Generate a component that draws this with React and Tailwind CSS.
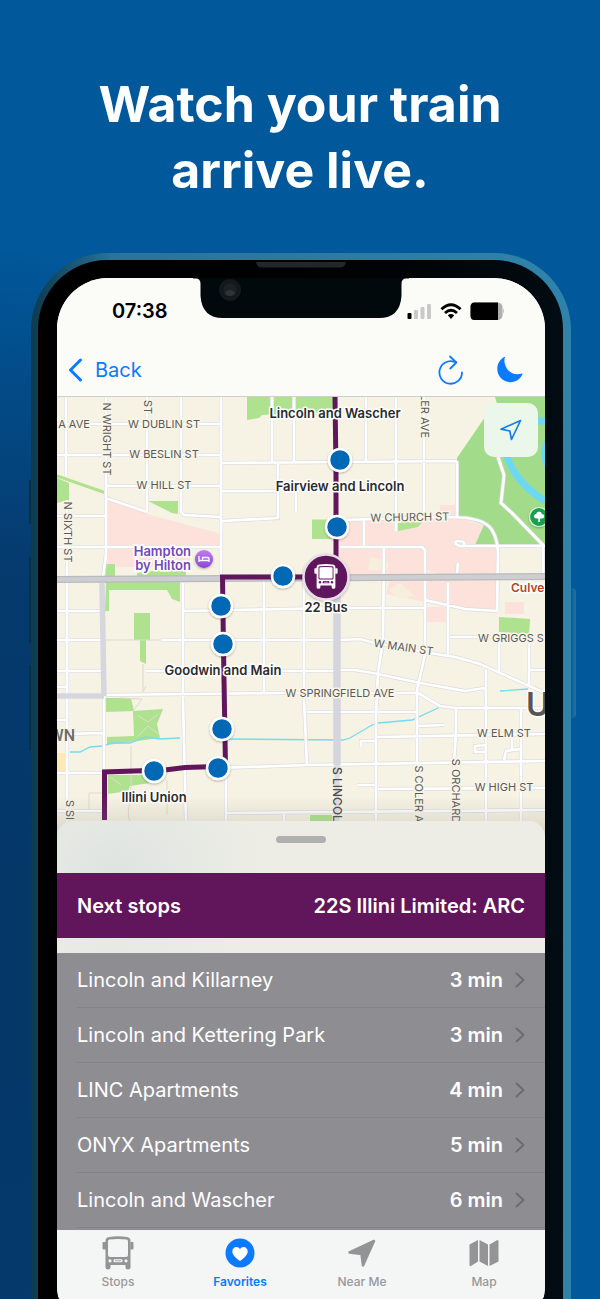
import React from "react";

const PURPLE = "#61165c";

const nextStops = [
  { name: "Lincoln and Killarney", eta: "3 min" },
  { name: "Lincoln and Kettering Park", eta: "3 min" },
  { name: "LINC Apartments", eta: "4 min" },
  { name: "ONYX Apartments", eta: "5 min" },
  { name: "Lincoln and Wascher", eta: "6 min" },
];

const parks = [
  "M247 397H336V412L280 414L262 415L259 418L247 420Z",
  "M57 478L69 483V500L57 503Z",
  "M148 501H178V514L172 513Z",
  "M106 564H115V577H105Z",
  "M137 573L186 567V577H137Z",
  "M106 582H180V602L172 599L167 590H109V611H105Z",
  "M134 613H150V640H146V664L140 661V640H134Z",
  "M105 698H131L134 711L106 712Z",
  "M133 711L163 709L157 724L160 738L107 745V737L134 736Z",
  "M108 775H150V783L130 786L128 791L108 794Z",
  "M312 519.500H335V539H312Z",
  "M397 523L424 520L418 527L398 531Z",
  "M495 397H545V545H475L484 525L457 515V458L483 420L497 404Z",
  "M499 617L530 619L529 635L499 632Z",
  "M310 815H332V822H310Z",
];

const pinks = [
  "M108 501L147 514L221 534V547H190V567H108Z",
  "M338 522L457 517L484 526L475 547H497V611L425 602L386 594L390 580H348L338 560Z",
  "M440 505H457V516H440Z",
  "M426 607H447V622H426Z",
  "M505 602H524V614H505Z",
];

const roads = [
  "M66 397V475", "M67 500V822", "M106 397V555L103 577", "M147 397V512", "M181 397V512L184 515L221 517",
  "M221 397V577", "M272 397V463", "M294 397V463", "M57 424H221", "M57 455H221", "M106 486H221",
  "M222 463L457 461", "M222 491H278", "M278 463V518L222 521", "M296 491V512", "M57 516H106",
  "M57 547H222", "M106 498L147 512", "M366 397V461", "M396 397V531", "M424 397V522", "M457 461V517",
  "M340 520L450 517Q484 517 492 530Q498 540 498 555L497 611", "M340 547H422L425 550V655L417 690V822",
  "M364 520V547", "M384 547L383 640L378 673L376 715V822", "M350 608H425", "M425 600L465 609L497 611",
  "M459 546H545M459 546Q452 542 458 541Q466 541 464 546", "M458 563L457 573", "M498 457L504 475L501 503L512 513L543 545V577",
  "M57 611H102", "M57 640H102", "M161 640H337", "M57 671H101", "M146 671H337", "M183 611L337 608",
  "M183 583V700L186 822", "M264 580V692", "M104 695L280 693H418L440 706L456 708L545 708", "M57 687H66",
  "M57 720H66", "M65 734L103 733", "M104 696V772", "M57 773H104", "M57 811H104", "M218 768L307 765L545 761",
  "M226 770V822", "M226 813L545 810", "M284 813V822", "M304 583V700L307 765", "M340 640L360 639L375 643L430 653L455 657L480 664L545 693",
  "M340 670H355L378 674L420 683L465 691L485 688", "M448 583V655", "M499 636V672", "M529 635V685", "M486 670V822",
  "M450 637H545", "M530 670H545", "M307 712H416", "M376 737L545 734", "M418 726L444 725", "M456 708V735L454 760L456 822",
  "M521 708V822", "M361 747V741H376", "M486 745L475 746V752L486 752", "M504 760L506 751L520 749", "M512 734V749",
  "M357 785H376", "M378 789L545 788",
];

const trails =
  "M104 640H161M143 664V692L146 686M89 812V793H104M131 746V800Q126 812 130 822M167 815V780M120 698L142 699L133 711M137 715L148 722L158 714M137 737L148 726L160 735M110 777L121 785";

const streams =
  "M70 752H80L90 747L103 746L112 743H130L146 737L160 739L180 738M228 739L343 740L350 738L372 725L378 723L412 720L440 707M500 691L528 689";

const streetLabels = [
  { t: "A AVE", x: 74, y: 428 },
  { t: "W DUBLIN ST", x: 164, y: 428 },
  { t: "W BESLIN ST", x: 164, y: 458 },
  { t: "W HILL ST", x: 164, y: 489 },
  { t: "N WRIGHT ST", x: 103, y: 439, r: 90 },
  { t: "N SIXTH ST", x: 64, y: 532, r: 90 },
  { t: "ST", x: 144, y: 407, r: 90 },
  { t: "LER AVE", x: 421, y: 416, r: 90 },
  { t: "W CHURCH ST", x: 410, y: 521, r: -1 },
  { t: "W MAIN ST", x: 403, y: 651, r: 8 },
  { t: "W GRIGGS S", x: 511, y: 642 },
  { t: "W SPRINGFIELD AVE", x: 340, y: 697 },
  { t: "W ELM ST", x: 504, y: 737 },
  { t: "W HIGH ST", x: 504, y: 791 },
  { t: "S COLER A", x: 415, y: 794, r: 90 },
  { t: "S ORCHARD", x: 452, y: 791, r: 90 },
  { t: "S SI", x: 66, y: 810, r: 90 },
];

const stopLabels = [
  { t: "Lincoln and Wascher", x: 335, y: 418 },
  { t: "Fairview and Lincoln", x: 340, y: 491 },
  { t: "22 Bus", x: 326, y: 612 },
  { t: "Goodwin and Main", x: 223, y: 675 },
  { t: "Illini Union", x: 154, y: 802 },
];

const stopDots = [
  [340, 460], [337, 527], [283, 576], [221, 606], [223, 644], [222, 729], [218, 768], [154, 771],
];

const BUS_BODY =
  "M7 0.500Q16-0.800 25 0.500Q28.500 1 28.500 4.500V31Q28.500 33 26 33Q23.500 33 23.500 31V28.500H8.500V31Q8.500 33 6 33Q3.500 33 3.500 31V4.500Q3.500 1 7 0.500ZM1.500 5.500H3.700V13H1.500Q0.500 13 0.500 12V6.500Q0.500 5.500 1.500 5.500ZM30.500 5.500H28.300V13H30.500Q31.500 13 31.500 12V6.500Q31.500 5.500 30.500 5.500Z";

function BusGlyph({ body, cut, pane }) {
  return (
    <>
      <path d={BUS_BODY} fill={body} />
      <path d="M7.500 3Q16 2 24.500 3Q26 3.200 26 5V18.500Q26 20.500 24 20.500H8Q6 20.500 6 18.500V5Q6 3.200 7.500 3Z" fill={cut} />
      {pane && <path d="M8.500 4.200Q16 3.600 23.500 4.200Q24.800 4.300 24.800 5.500V18Q24.800 19.200 23.500 19.200H8.500Q7.200 19.200 7.200 18V5.500Q7.200 4.300 8.500 4.200Z" fill={pane} />}
      <circle cx="8" cy="24.300" r="1.600" fill={cut} />
      <circle cx="24" cy="24.300" r="1.600" fill={cut} />
      <rect x="11.500" y="22.800" width="9" height="3" rx="1.200" fill={cut} />
      <path d="M13 24.300H19" stroke={body} strokeWidth="0.800" />
    </>
  );
}

function RouteMap() {
  const d = roads.join("");
  return (
    <svg viewBox="57 397 488 440" className="block w-full bg-[#f6f2e4]" role="img" aria-label="Live route map">
      <defs>
        <linearGradient id="hotel" x1="0" y1="0" x2="0" y2="1">
          <stop offset="0" stopColor="#c07cf0" />
          <stop offset="1" stopColor="#8b47d6" />
        </linearGradient>
        <linearGradient id="fade" x1="0" y1="0" x2="0" y2="1">
          <stop offset="0" stopColor="#8a8a7a" stopOpacity="0" />
          <stop offset="1" stopColor="#8a8a7a" stopOpacity="0.28" />
        </linearGradient>
        <filter id="soft" x="-30%" y="-30%" width="160%" height="160%">
          <feDropShadow dx="0" dy="1" stdDeviation="1.200" floodOpacity="0.300" />
        </filter>
      </defs>

      {pinks.map((p) => <path key={p} d={p} fill="#fde2dc" />)}
      <path d="M370 557L388 562V570H368ZM388 590L400 583L415 596L400 599ZM427 570L440 575H427Z" fill="#f6efdc" />
      {parks.map((p) => <path key={p} d={p} fill={p.startsWith("M495") ? "#a2dc8a" : "#aee28f"} />)}
      <path d="M57 476L106 493" stroke="#aee28f" strokeWidth="3" />
      <path d="M57 753H66V771H57Z" fill="#fbe9b8" />
      <path d="M545 421H530Q504 428 506 452Q512 480 545 501" fill="none" stroke="#6cd8f4" strokeWidth="7" />
      <path d="M548 442Q541 452 548 466" fill="none" stroke="#6cd8f4" strokeWidth="7" />
      <path d={trails} fill="none" stroke="#dedccf" strokeWidth="1" />
      <path d={streams} fill="none" stroke="#75daf2" strokeWidth="1.300" />
      <path d={d} fill="none" stroke="#dddce3" strokeWidth="4" />
      <path d={d} fill="none" stroke="#ffffff" strokeWidth="2.700" strokeLinejoin="round" />

      <path d="M102 583L104 696M57 696H104" fill="none" stroke="#d6d6df" strokeWidth="5.500" />
      <path d="M337 577V765" stroke="#d5d5de" strokeWidth="7.500" />
      <path d="M57 579.500L222 578.500L545 576.500" fill="none" stroke="#b9babd" strokeWidth="7" />
      <path d="M57 579.500L222 578.500L545 576.500" fill="none" stroke="#cdced1" strokeWidth="4.500" />
      <path d="M337 765V837" stroke="#dddce3" strokeWidth="5" />

      <path
        d="M335 397L336 470L336 577H222.500L223.500 650L225.500 767L218 766.500L185 767.500L165 770L104.500 772V820"
        fill="none"
        stroke={PURPLE}
        strokeWidth="5"
      />

      <g fontFamily="Inter, sans-serif" textAnchor="middle">
        <g fontSize="11" fontWeight="400" fill="#5c5a57" stroke="#f8f5ea" strokeWidth="3" paintOrder="stroke">
          {streetLabels.map((l) => (
            <text key={l.t + l.x} x={l.x} y={l.y} transform={l.r ? `rotate(${l.r} ${l.x} ${l.y})` : undefined}>{l.t}</text>
          ))}
        </g>
        <text x="333" y="767" transform="rotate(90 333 767)" textAnchor="start" fontSize="12" fontWeight="500" fill="#4c4b49">S LINCOLN</text>
        <text x="75" y="741" textAnchor="end" fontFamily="Roboto, sans-serif" fontSize="16" fontWeight="500" fill="#6b6a67">WN</text>
        <text x="526" y="716" textAnchor="start" fontSize="32" fontWeight="600" fill="#575654" stroke="#fff" strokeWidth="3" paintOrder="stroke">U</text>
        <g fontSize="13" fontWeight="600" fill="#7048bb" stroke="#fff" strokeWidth="3" paintOrder="stroke" textAnchor="end">
          <text x="191" y="556">Hampton</text>
          <text x="191" y="570">by Hilton</text>
        </g>
        <text x="511" y="592" textAnchor="start" fontSize="12" fontWeight="600" fill="#b0461f" stroke="#fff" strokeWidth="3" paintOrder="stroke">Culve</text>
      </g>

      <g filter="url(#soft)">
        <circle cx="204" cy="559" r="9" fill="url(#hotel)" />
        <path d="M199 556V562M199 560.500H209V562M209 560V558.500Q209 557.500 208 557.500H202.500V559.500" fill="none" stroke="#fff" strokeWidth="1.300" />
      </g>
      <g filter="url(#soft)">
        <circle cx="539" cy="517" r="9.500" fill="#12a150" stroke="#e7f7e4" strokeWidth="1.200" />
        <path d="M538.300 522V518.500H536Q533.500 518 534 515.800Q534.500 514 536 514Q537 511.500 539 511.500Q541.500 511.500 542 514Q544.500 514.300 544.300 516.500Q544 518.500 542 518.500H540V522Z" fill="#fff" />
      </g>

      <g filter="url(#soft)">
        {stopDots.map(([x, y]) => (
          <circle key={`${x}-${y}`} cx={x} cy={y} r="11" fill="#0467b5" stroke="#fff" strokeWidth="2.500" />
        ))}
      </g>
      <g filter="url(#soft)">
        <circle cx="326" cy="577" r="22.500" fill={PURPLE} stroke="#e6dfe6" strokeWidth="2.500" />
      </g>
      <g transform="translate(314 564) scale(0.750)">
        <BusGlyph body="#fff" cut={PURPLE} pane="#fff" />
      </g>

      <g fontFamily="Inter, sans-serif" textAnchor="middle" fontSize="13" fontWeight="600" fill="#2a2a2c" stroke="#fff" strokeWidth="3" strokeLinejoin="round" paintOrder="stroke">
        {stopLabels.map((l) => <text key={l.t} x={l.x} y={l.y}>{l.t}</text>)}
      </g>
      <rect x="57" y="796" width="488" height="41" fill="url(#fade)" />
    </svg>
  );
}

function Notch() {
  return (
    <svg viewBox="0 0 216 58" className="absolute left-1/2 top-0 h-[58px] w-[216px] -translate-x-1/2" aria-hidden="true">
      <path d="M0 18H216V18.500H213Q208.500 18.500 208.500 24V36Q207 58 186 58H30Q9 58 7.500 36V24Q7.500 18.500 3 18.500H0Z" fill="#02090d" />
      <path d="M63 2H153Q152 7.500 147 7.500H69Q64 7.500 63 2Z" fill="#22272a" />
      <circle cx="37" cy="30" r="11" fill="#14191c" />
      <circle cx="37" cy="30" r="6.500" fill="#1b2124" />
      <ellipse cx="37" cy="33" rx="5" ry="3" fill="#2d3337" />
    </svg>
  );
}

function StatusIcons() {
  return (
    <svg viewBox="0 0 98 20" className="h-5 w-[98px]" role="img" aria-label="Signal, Wi-Fi and battery">
      <rect x="0.500" y="12" width="4" height="6" rx="1" fill="#000" />
      <g fill="#c9cac7">
        <rect x="7" y="9" width="4" height="9" rx="1" />
        <rect x="13.500" y="6" width="4" height="12" rx="1" />
        <rect x="20" y="3" width="4" height="15" rx="1" />
      </g>
      <g fill="none" stroke="#000" strokeWidth="2.800">
        <path d="M34.500 8.300Q44 -0.800 53.500 8.300" />
        <path d="M38 12Q44 6.500 50 12" />
      </g>
      <path d="M40.800 14.300Q44 11.800 47.200 14.300L44 18Z" fill="#000" />
      <path d="M67.500 1.500H90Q95 1.500 95.500 6V14.500Q95 19 90 19H67.500Q63.500 19 63.500 14.500V6Q63.500 1.500 67.500 1.500Z" fill="#aeb0ad" />
      <path d="M67.500 1.500H91V19H67.500Q63.500 19 63.500 14.500V6Q63.500 1.500 67.500 1.500Z" fill="#000" />
      <path d="M96 7Q97.800 10 96 13Z" fill="#aeb0ad" />
    </svg>
  );
}

function Tab({ label, active, children }) {
  return (
    <a
      href={`#${label.toLowerCase().replace(" ", "-")}`}
      aria-current={active ? "page" : undefined}
      className={`flex flex-col items-center gap-1 text-xs ${active ? "font-semibold text-[#0a7aff]" : "font-medium text-[#98989b]"}`}
    >
      <svg viewBox="0 0 34 34" className="h-[34px] w-[34px]" aria-hidden="true">{children}</svg>
      {label}
    </a>
  );
}

export default function App() {
  return (
    <main className="flex min-h-screen flex-col overflow-hidden bg-[#01589b] bg-[radial-gradient(ellipse_70%_56%_at_0%_75%,#053768_0%,#053a6d_55%,transparent_100%)] pt-[71px] font-[Inter,sans-serif]">
      <h1 className="text-center text-[50px] font-bold leading-[66px] text-white">
        Watch your train
        <br />
        arrive live.
      </h1>

      <div className="relative ml-[31px] mr-[29px] mt-[50px] flex grow flex-col">
        <span className="absolute -left-[2px] top-[227px] h-[44px] w-[2px] bg-[#0a3046]" />
        <span className="absolute -left-[2px] top-[304px] h-[86px] w-[2px] bg-[#0a3046]" />
        <span className="absolute -left-[2px] top-[412px] h-[86px] w-[2px] bg-[#0a3046]" />
        <span className="absolute -right-[5px] top-[335px] h-[130px] w-[5px] rounded-r bg-linear-to-r from-[#0a5c94] to-[#2473a2]" />

        <div className="flex grow flex-col rounded-t-[77px] bg-linear-to-r from-[#0d3a4e] via-[#2a7399] via-15% to-[#2f83aa] pl-[7px] pr-[8px] pt-[7px]">
          <div className="relative flex grow flex-col rounded-t-[69px] bg-linear-to-r from-black to-[#020c12] pl-[19px] pr-[18px] pt-[18px]">
            <div className="flex grow flex-col overflow-hidden rounded-t-[51px] bg-[#f4f5f5] [border-bottom-left-radius:3px_14px] [border-bottom-right-radius:3px_14px]">
              <header className="border-b border-[#cfcfca] bg-[#fbfcf8]">
                <div className="flex h-[66px] items-center justify-between pl-[55px] pr-10">
                  <span className="text-[20px] font-semibold text-black">07:38</span>
                  <StatusIcons />
                </div>
                <nav className="flex h-[52px] items-center justify-between pl-[11px] pr-[22px] text-[#0a7aff]">
                  <button type="button" className="flex items-center gap-3 text-[20px]">
                    <svg viewBox="0 0 15 24" className="h-6 w-[15px]" fill="none" stroke="currentColor" strokeWidth="3" strokeLinecap="round" strokeLinejoin="round" aria-hidden="true">
                      <path d="M12.500 2L2.500 12L12.500 22" />
                    </svg>
                    Back
                  </button>
                  <span className="flex items-center gap-8">
                    <button type="button" aria-label="Refresh">
                      <svg viewBox="0 0 28 30" className="h-[30px] w-[28px]" fill="none" stroke="currentColor" strokeWidth="1.800" strokeLinecap="round" strokeLinejoin="round" aria-hidden="true">
                        <path d="M25 17.500A11.300 11.300 0 1 1 17.500 6.800L19 7.200" />
                        <path d="M13 1.500L19.300 7.500L13.300 13.500" />
                      </svg>
                    </button>
                    <button type="button" aria-label="Dark mode">
                      <svg viewBox="1 1 27 27" className="h-[26px] w-[26px]" fill="currentColor" aria-hidden="true">
                        <path d="M9.300 1.200C8.600 3 8.500 5 9 7.500C10.500 14.500 16 19 22.500 18.900C24.300 18.900 25.500 18.600 26.800 18.200C27.400 18.100 27.600 18.500 27.400 19C25.300 24.200 20.500 27.200 15 27.200C7.500 27.200 1.300 21.300 1.300 13.500C1.300 8 4.200 3.300 8.600 0.900C9.200 0.600 9.500 0.800 9.300 1.200Z" />
                      </svg>
                    </button>
                  </span>
                </nav>
              </header>

              <section className="relative">
                <RouteMap />
                <button type="button" aria-label="My location" className="absolute right-[7px] top-[6px] flex h-[54px] w-[54px] items-center justify-center rounded-[10px] bg-[#eaf7ea]">
                  <svg viewBox="0 0 24 24" className="h-6 w-6" fill="none" stroke="#147eea" strokeWidth="1.700" strokeLinejoin="round" aria-hidden="true">
                    <path d="M21.500 2.500L2 11.200L10.800 13L12.500 21.500Z" />
                  </svg>
                </button>
              </section>

              <section className="relative -mt-4 flex grow flex-col rounded-t-2xl bg-[#edede5] bg-[radial-gradient(ellipse_at_12%_12%,#dfe4e1_0%,transparent_25%)]">
                <div className="flex h-[52px] justify-center pt-[15px]">
                  <span className="h-[7px] w-[50px] rounded-full bg-[#b0b0ae]" />
                </div>
                <h2 className="flex h-[65px] items-center justify-between bg-[#61165c] px-5 text-[20px] font-semibold text-white">
                  <span>Next stops</span>
                  <span>22S Illini Limited: ARC</span>
                </h2>
                <ul className="mt-[15px] grow bg-[#8e8d92] text-[20px] text-white">
                  {nextStops.map((s) => (
                    <li key={s.name}>
                      <button type="button" className="flex h-[55px] w-full items-center pl-5 text-left">
                        <span className="flex h-full grow items-center border-b border-[#838287] pr-5">
                          <span className="grow font-normal">{s.name}</span>
                          <span className="font-semibold">{s.eta}</span>
                          <svg viewBox="0 0 10 16" className="ml-3 h-4 w-[10px]" fill="none" stroke="#6c6b70" strokeWidth="2" strokeLinecap="round" strokeLinejoin="round" aria-hidden="true">
                            <path d="M1.500 1.500L8.500 8L1.500 14.500" />
                          </svg>
                        </span>
                      </button>
                    </li>
                  ))}
                </ul>
              </section>

              <nav className="grid h-[69px] shrink-0 grid-cols-4 bg-[#f4f5f5] pt-[6px]">
                <Tab label="Stops">
                  <g transform="translate(1 0.500)">
                    <BusGlyph body="#949496" cut="#f4f5f5" />
                  </g>
                </Tab>
                <Tab label="Favorites" active>
                  <circle cx="17" cy="17" r="14.500" fill="currentColor" />
                  <path d="M17 25C12 21.500 9.300 18.500 9.300 15.300C9.300 12.700 11.200 11 13.400 11C15 11 16.300 11.900 17 13.200C17.700 11.900 19 11 20.600 11C22.800 11 24.700 12.700 24.700 15.300C24.700 18.500 22 21.500 17 25Z" fill="#fff" />
                </Tab>
                <Tab label="Near Me">
                  <path d="M29 5L18 29.500L16.500 18L4.500 16.500Z" fill="#949496" stroke="#949496" strokeWidth="2.500" strokeLinejoin="round" />
                </Tab>
                <Tab label="Map">
                  <path d="M2.500 8.500L11 4V25.500L4 30Q2.500 30.500 2.500 29ZM12.500 4L21 8.500V30L12.500 25.500ZM22.500 8.500L30 4.200Q31.500 3.800 31.500 5.500V25.500L22.500 30Z" fill="#949496" />
                </Tab>
              </nav>
            </div>
            <Notch />
          </div>
        </div>
      </div>
    </main>
  );
}
